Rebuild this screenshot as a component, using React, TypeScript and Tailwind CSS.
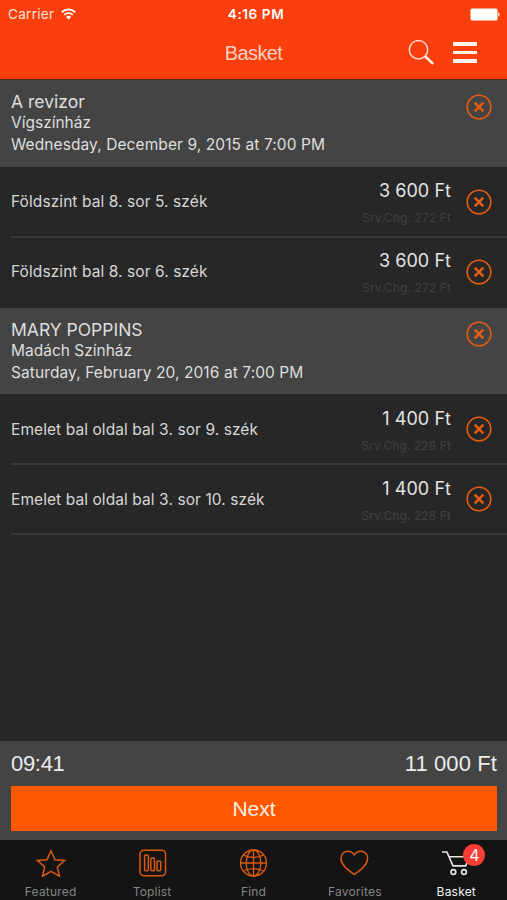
import React, { useState } from 'react';

interface Ticket {
  seat: string;
  price: string;
  fee: string;
}

interface Performance {
  title: string;
  venue: string;
  date: string;
  tickets: Ticket[];
}

const performances: Performance[] = [
  {
    title: 'A revizor',
    venue: 'Vígszínház',
    date: 'Wednesday, December 9, 2015 at 7:00 PM',
    tickets: [
      { seat: 'Földszint bal 8. sor 5. szék', price: '3 600 Ft', fee: 'Srv.Chg. 272 Ft' },
      { seat: 'Földszint bal 8. sor 6. szék', price: '3 600 Ft', fee: 'Srv.Chg. 272 Ft' },
    ],
  },
  {
    title: 'MARY POPPINS',
    venue: 'Madách Színház',
    date: 'Saturday, February 20, 2016 at 7:00 PM',
    tickets: [
      { seat: 'Emelet bal oldal bal 3. sor 9. szék', price: '1 400 Ft', fee: 'Srv.Chg. 228 Ft' },
      { seat: 'Emelet bal oldal bal 3. sor 10. szék', price: '1 400 Ft', fee: 'Srv.Chg. 228 Ft' },
    ],
  },
];

const StatusBar: React.FC = () => (
  <div className="grid h-7 grid-cols-3 items-center pl-2 pr-[7px] text-[13.5px] text-white">
    <div className="flex items-center gap-[7px]">
      <span className="tracking-[0.3px] text-[#ffe3da]">Carrier</span>
      <svg className="h-[12px] w-[15px]" viewBox="0 0 15 12" fill="none" stroke="#fff" strokeWidth="1.9">
        <path d="M0.8 4.2a9.6 9.6 0 0 1 13.4 0" />
        <path d="M3.2 6.9a6.1 6.1 0 0 1 8.6 0" />
        <path d="M7.5 11.6 4.9 8.9a3.8 3.8 0 0 1 5.2 0z" fill="#fff" stroke="none" />
      </svg>
    </div>
    <span className="pl-[4px] text-center font-semibold tracking-[0.6px] whitespace-nowrap">4:16 PM</span>
    <svg className="h-[13px] w-[30px] justify-self-end" viewBox="0 0 30 13" fill="#fff">
      <rect x="0.5" y="0.5" width="27" height="12" rx="1.5" />
      <path d="M28.2 4.3c1.8.6 1.8 3.8 0 4.4z" />
    </svg>
  </div>
);

const NavBar: React.FC = () => (
  <div className="grid h-[51px] grid-cols-3 items-center font-['Liberation_Sans',sans-serif]">
    <h1 className="col-start-2 -mt-0.5 text-center text-[20px] tracking-[-0.6px] text-[#ffd0c0]">Basket</h1>
    <div className="flex items-center justify-end gap-[18px] pr-[30px]">
      <button aria-label="Search">
        <svg className="h-7 w-7" viewBox="0 0 28 28" fill="none">
          <circle cx="11.5" cy="9.8" r="9.2" stroke="#ffd9cc" strokeWidth="1.5" />
          <path d="M18 16.3l8.2 7.6" stroke="#fff0ea" strokeWidth="2.6" />
        </svg>
      </button>
      <button aria-label="Menu" className="flex w-6 -translate-y-px flex-col gap-[5px]">
        <span className="h-[3.5px] bg-[#fff3ee]" />
        <span className="h-[3.5px] bg-[#fff3ee]" />
        <span className="h-[3.5px] bg-[#fff3ee]" />
      </button>
    </div>
  </div>
);

const RemoveButton: React.FC<{ onClick?: () => void }> = ({ onClick }) => (
  <button aria-label="Remove" onClick={onClick} className="shrink-0">
    <svg className="h-[26px] w-[26px]" viewBox="0 0 26 26" fill="none" stroke="#e65c10">
      <circle cx="13" cy="13" r="11.8" strokeWidth="1.6" />
      <path d="M8.7 8.7l8.6 8.6M17.3 8.7l-8.6 8.6" strokeWidth="2.6" />
    </svg>
  </button>
);

const TicketRow: React.FC<{ ticket: Ticket; divider: boolean }> = ({ ticket, divider }) => (
  <li
    className={`ml-[11px] flex h-[70px] items-center border-b-2 pr-[15px] ${divider ? 'border-[#393939]' : 'border-transparent'}`}
  >
    <span className="flex-1 pt-px text-[15.5px] tracking-[0.08px] whitespace-nowrap text-[#d6d6d6]">{ticket.seat}</span>
    <div className="mr-[15px] flex flex-col items-end pt-[2px] whitespace-nowrap">
      <span className="text-[18px] leading-6 tracking-[0.05px] text-[#e4e4e4]">{ticket.price}</span>
      <span className="mt-[7px] text-[12px] leading-4 tracking-[0.1px] text-[#414141]">{ticket.fee}</span>
    </div>
    <RemoveButton />
  </li>
);

const PerformanceSection: React.FC<{ performance: Performance; last: boolean }> = ({ performance, last }) => (
  <section>
    <header className="flex h-[86.5px] items-start justify-between bg-[#444] pl-[11px] pr-[15px] pt-[11px] text-[#dedede]">
      <div className="whitespace-nowrap">
        <h2 className="text-[17.5px] leading-[22px]">{performance.title}</h2>
        <p className="text-[15.5px] leading-[20px]">{performance.venue}</p>
        <p className="text-[15.5px] leading-[23px] tracking-[0.09px]">{performance.date}</p>
      </div>
      <div className="mt-[2.9px]">
        <RemoveButton />
      </div>
    </header>
    <ul className="pt-px">
      {performance.tickets.map((ticket, i) => (
        <TicketRow key={ticket.seat} ticket={ticket} divider={last || i < performance.tickets.length - 1} />
      ))}
    </ul>
  </section>
);

const StarIcon: React.FC = () => (
  <svg className="h-7 w-[30px]" viewBox="0 0 30 28" fill="none" stroke="currentColor" strokeWidth="1.5">
    <path d="M15 1.8l4 8.9 9.500.8-7.200 6.500 2.200 9.200L15 22.400l-8.500 4.800 2.200-9.200-7.200-6.500 9.500-.8z" />
  </svg>
);

const ToplistIcon: React.FC = () => (
  <svg className="h-7 w-7 translate-x-[0.800px]" viewBox="0 0 28 28" fill="none" stroke="currentColor" strokeWidth="1.5">
    <rect x="1.200" y="1.200" width="25.600" height="25.600" rx="4" />
    <rect x="5.800" y="6" width="3.700" height="15.800" rx="1.300" />
    <rect x="12" y="9" width="3.700" height="12.800" rx="1.300" />
    <rect x="18.200" y="12" width="3.700" height="9.800" rx="1.300" />
  </svg>
);

const GlobeIcon: React.FC = () => (
  <svg className="h-7 w-7 translate-x-[0.500px]" viewBox="0 0 28 28" fill="none" stroke="currentColor" strokeWidth="1.3">
    <circle cx="14" cy="14" r="13" />
    <ellipse cx="14" cy="14" rx="7.3" ry="13" />
    <path d="M14 1v26M1 14h26M4 6c5.5 3.3 14.5 3.3 20 0M4 22c5.5-3.3 14.5-3.3 20 0" />
  </svg>
);

const HeartIcon: React.FC = () => (
  <svg className="h-7 w-[30px] -translate-x-[0.700px]" viewBox="0 0 30 28" fill="none" stroke="currentColor" strokeWidth="1.5">
    <path d="M15 5.800C13.300 3.300 10.800 2.300 8.500 2.300 4.600 2.300 1.700 5.300 1.700 9.300c0 6.500 6.300 11 13.300 16.200C22 20.300 28.300 15.800 28.300 9.300c0-4-2.900-7-6.800-7-2.300 0-4.800 1-6.500 3.500z" />
  </svg>
);

const CartIcon: React.FC = () => (
  <svg className="h-7 w-7" viewBox="0 0 28 28" fill="none" stroke="currentColor" strokeWidth="1.6">
    <path d="M0 3h4.900L11 16.900h12.700L27.300 7.700H7.200" />
    <circle cx="11.400" cy="23" r="2.400" />
    <circle cx="22" cy="23" r="2.400" />
  </svg>
);

const tabs = [
  { label: 'Featured', Icon: StarIcon },
  { label: 'Toplist', Icon: ToplistIcon },
  { label: 'Find', Icon: GlobeIcon },
  { label: 'Favorites', Icon: HeartIcon },
  { label: 'Basket', Icon: CartIcon, badge: 4 },
];

const App: React.FC = () => {
  const [activeTab, setActiveTab] = useState<string>('Basket');

  return (
    <div className="flex h-[900px] w-[507px] flex-col overflow-hidden bg-[#272727] font-['Inter',sans-serif]">
      <div className="border-b border-[#54281c] bg-[#fa3f0c]">
        <StatusBar />
        <NavBar />
      </div>

      <main className="flex-1">
        {performances.map((performance, i) => (
          <PerformanceSection
            key={performance.title}
            performance={performance}
            last={i === performances.length - 1}
          />
        ))}
      </main>

      <div className="h-[99px] bg-[#444] pl-[11px] pr-[10px] font-['Liberation_Sans',sans-serif] text-[#ececec]">
        <div className="flex h-[45px] items-center justify-between text-[22px]">
          <span className="tracking-[-0.3px]">09:41</span>
          <span className="tracking-[0.1px]">11 000 Ft</span>
        </div>
        <button className="h-[45px] w-full bg-[#ff5900] text-[21px] text-[#fff0e4]">Next</button>
      </div>

      <nav className="grid h-[60px] grid-cols-5 bg-[#141414]">
        {tabs.map(({ label, Icon, badge }) => (
          <button
            key={label}
            onClick={() => setActiveTab(label)}
            className="flex flex-col items-center pt-[9px]"
          >
            <span className={`relative ${activeTab === label ? 'text-[#e6e6e6]' : 'text-[#dc5a10]'}`}>
              <Icon />
              {badge && (
                <span className="absolute -top-[5px] left-[21px] flex h-[22px] w-[22px] items-center justify-center rounded-full bg-[#fc3d35] text-[16px] text-white">
                  {badge}
                </span>
              )}
            </span>
            <span className={`mt-[7px] text-[12px] leading-4 tracking-[0.2px] ${activeTab === label ? 'text-[#f2f2f2]' : 'text-[#858585]'}`}>
              {label}
            </span>
          </button>
        ))}
      </nav>
    </div>
  );
};

export default App;
